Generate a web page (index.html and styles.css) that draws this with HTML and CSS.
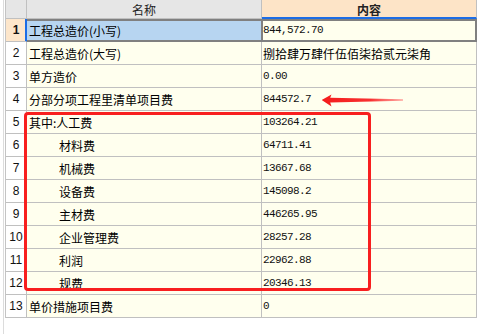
FILE: index.html
```html
<!DOCTYPE html>
<html lang="zh">
<head>
<meta charset="utf-8">
<title>工程总造价</title>
<link rel="stylesheet" href="styles.css">
</head>
<body>
<div class="screen">
  <div class="gutter"></div>
  <div class="sheet">
    <div class="hd num"></div><div class="hd name">名称</div><div class="hd content">内容</div>

    <div class="cell num sel-num">1</div><div class="cell name sel-name">工程总造价(小写)</div><div class="cell val sel-val">844,572.70</div>
    <div class="cell num">2</div><div class="cell name">工程总造价(大写)</div><div class="cell val cjk">捌拾肆万肆仟伍佰柒拾贰元柒角</div>
    <div class="cell num">3</div><div class="cell name">单方造价</div><div class="cell val">0.00</div>
    <div class="cell num">4</div><div class="cell name">分部分项工程里清单项目费</div><div class="cell val">844572.7</div>
    <div class="cell num">5</div><div class="cell name">其中:人工费</div><div class="cell val">103264.21</div>
    <div class="cell num">6</div><div class="cell name sub">材料费</div><div class="cell val">64711.41</div>
    <div class="cell num">7</div><div class="cell name sub">机械费</div><div class="cell val">13667.68</div>
    <div class="cell num">8</div><div class="cell name sub">设备费</div><div class="cell val">145098.2</div>
    <div class="cell num">9</div><div class="cell name sub">主材费</div><div class="cell val">446265.95</div>
    <div class="cell num">10</div><div class="cell name sub">企业管理费</div><div class="cell val">28257.28</div>
    <div class="cell num">11</div><div class="cell name sub">利润</div><div class="cell val">22962.88</div>
    <div class="cell num">12</div><div class="cell name sub">规费</div><div class="cell val">20346.13</div>
    <div class="cell num">13</div><div class="cell name">单价措施项目费</div><div class="cell val">0</div>
  </div>
  <div class="redbox"></div>
  <svg class="arrow" width="90" height="20" viewBox="0 0 90 20">
    <defs>
      <linearGradient id="ag" x1="0" y1="0" x2="1" y2="0">
        <stop offset="0" stop-color="#f41c1c"/>
        <stop offset="0.6" stop-color="#f83030"/>
        <stop offset="1" stop-color="#ff6a6a" stop-opacity="0.6"/>
      </linearGradient>
    </defs>
    <path d="M3.7 10 L13.5 4.6 L12.2 7.7 L85 9.3 L85 10.8 L12.2 12.5 L13.5 16.6 Z" fill="url(#ag)"/>
  </svg>
</div>
</body>
</html>
```

FILE: styles.css
```css
html, body {
  margin: 0;
  padding: 0;
  background: #ffffff;
}

.screen {
  position: relative;
  display: flex;
  height: 334px;
  width: 493px;
  overflow: hidden;
  font-family: "Noto Sans CJK SC", "Noto Sans", sans-serif;
  font-size: 12px;
  color: #000;
}

.gutter {
  width: 4px;
  box-sizing: border-box;
  border-right: 1px solid #dcdcdc;
  margin-right: 1px;
}

.sheet {
  display: grid;
  grid-template-columns: 21px 235px 215px;
  grid-template-rows: 19px;
  grid-auto-rows: 23px;
  align-self: flex-start;
  border-left: 1px solid #c4c4c4;
}

.hd,
.cell {
  box-sizing: border-box;
  display: flex;
  align-items: center;
  border-right: 1px solid #c0c0c0;
  border-bottom: 1px solid #c0c0c0;
  white-space: nowrap;
  overflow: hidden;
}

.hd {
  background: #e6e6e6;
  justify-content: center;
  color: #222;
}

.hd.content {
  background: #fde4c7;
  font-weight: bold;
  border-bottom: 2px solid #1c6de6;
  padding-top: 1px;
}

.cell {
  background: #ffffee;
}

.cell.num {
  background: #ffffff;
  justify-content: center;
  font-family: "Liberation Sans", "DejaVu Sans", sans-serif;
  font-size: 12px;
  color: #111;
}

.cell.name {
  padding-left: 2px;
}

.cell.name.sub {
  padding-left: 32px;
}

.cell.val {
  padding-left: 1px;
  font-family: "Liberation Mono", "DejaVu Sans Mono", monospace;
  font-size: 11px;
  letter-spacing: -0.6px;
  color: #111;
}

.cell.val.cjk {
  font-family: "Noto Sans CJK SC", sans-serif;
  font-size: 12px;
  letter-spacing: 0;
  color: #000;
}

/* selected first row */
.cell.sel-num {
  background: #fde6cb;
  font-weight: bold;
  border-right: 1px solid #1c6de6;
  box-shadow: inset -1px 0 0 #1c6de6;
}

.cell.sel-name {
  background: #b7d5f1;
  border-right-color: #808080;
  border-bottom-color: #808080;
  box-shadow: inset 0 2px 0 #808080, inset 0 -1px 0 #808080;
}

.cell.sel-val {
  border-right-color: #808080;
  border-bottom-color: #808080;
  box-shadow: inset 1px 0 0 #808080, inset 0 2px 0 #808080,
    inset 0 -1px 0 #808080, inset -1px 0 0 #808080;
}

/* annotation overlays */
.redbox {
  position: absolute;
  left: 24px;
  top: 112px;
  width: 347px;
  height: 179px;
  box-sizing: border-box;
  border: 3px solid #f81f1f;
  border-radius: 4px;
  pointer-events: none;
}

.arrow {
  position: absolute;
  left: 318px;
  top: 90px;
  pointer-events: none;
}
```
